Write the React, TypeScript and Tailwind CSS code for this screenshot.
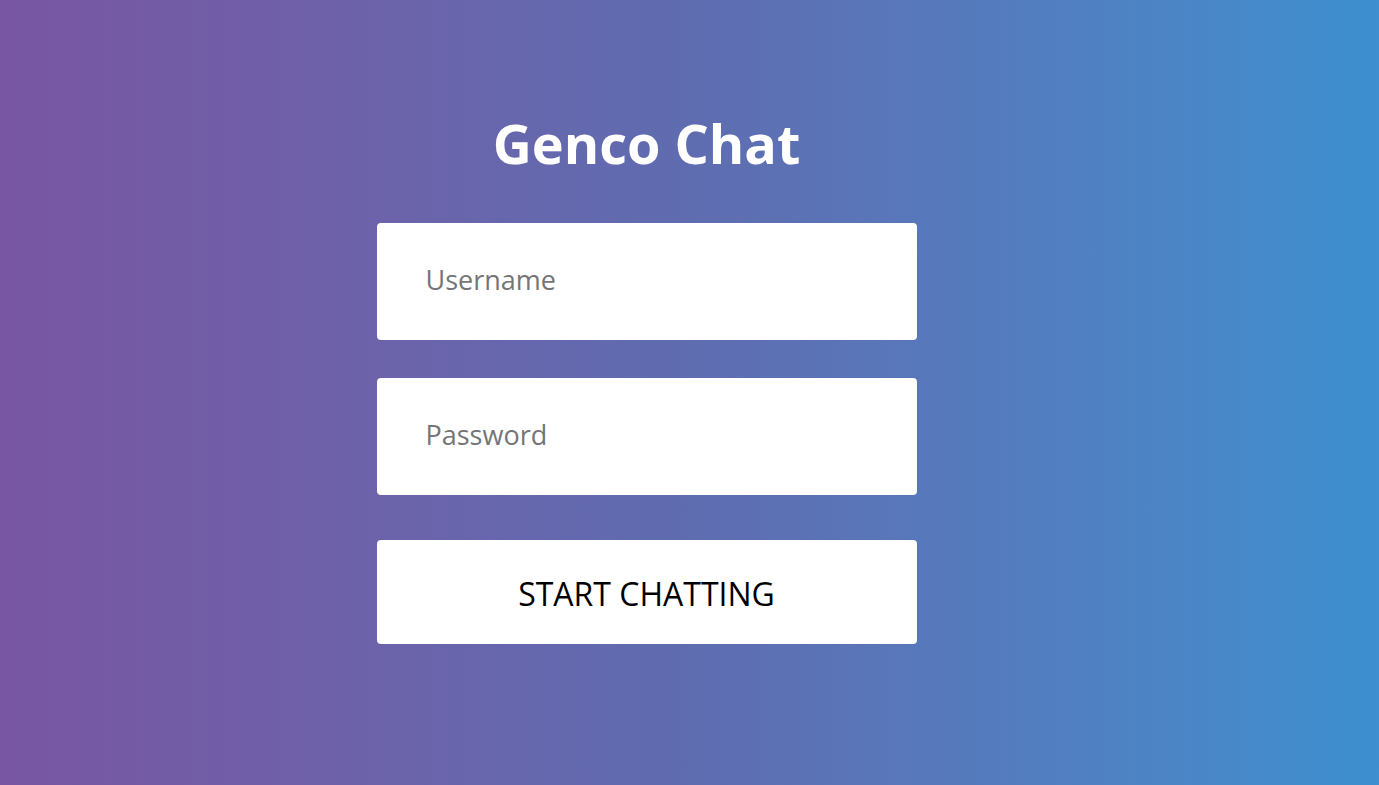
import React from 'react';

// Login screen for Genco Chat

export default function App() {
  return (
    <div
      className="flex min-h-[785px] w-full flex-col items-center bg-gradient-to-r from-[#7856a3] via-[#5f6cb0] to-[#3d8fcf] pr-[86px]"
      style={{ fontFamily: '"Open Sans", "Noto Sans", sans-serif' }}
    >
      <h1 className="mt-[103px] text-[54px] font-bold leading-[80px] text-white">Genco Chat</h1>

      <form className="mt-[40px] flex w-[540px] flex-col" onSubmit={(e) => e.preventDefault()}>
        <input
          type="text"
          placeholder="Username"
          className="h-[117px] w-full rounded bg-white pb-[4px] px-[49px] text-[27px] text-gray-800 placeholder:text-[#757575] outline-none"
        />
        <input
          type="password"
          placeholder="Password"
          className="mt-[38px] h-[117px] w-full rounded bg-white pb-[4px] px-[49px] text-[27px] text-gray-800 placeholder:text-[#757575] outline-none"
        />
        <button
          type="submit"
          className="mt-[45px] h-[104px] w-full rounded bg-white pt-[4px] text-[32px] text-black"
        >
          START CHATTING
        </button>
      </form>
    </div>
  );
}
